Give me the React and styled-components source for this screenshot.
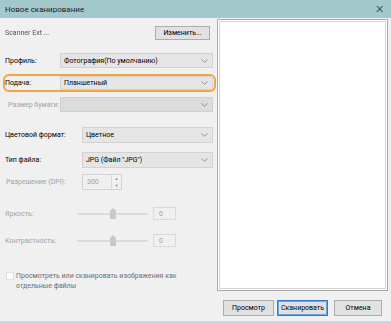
import React from 'react'
import styled, { createGlobalStyle } from 'styled-components'

const Global = createGlobalStyle`
  html, body {
    margin: 0;
    padding: 0;
    background: #f0f0f0;
  }
  * {
    box-sizing: border-box;
  }
`

const Window = styled.div`
  width: 391px;
  height: 323px;
  background: #f0f0f0;
  font-family: Roboto, 'Liberation Sans', Arial, sans-serif;
  font-size: 7px;
  color: #000;
  display: flex;
  flex-direction: column;
  border-bottom: 2px solid #c7d9dc;
  overflow: hidden;
`

const TitleBar = styled.div`
  height: 18px;
  flex: none;
  background: #a3c9cd;
  display: flex;
  align-items: center;
  justify-content: space-between;
  padding: 0 7px 0 5px;
  color: #1a1a1a;
  font-size: 8px;
`

const Close = styled.span`
  font-size: 11px;
  color: #4a5a5e;
  line-height: 1;
`

const Main = styled.div`
  flex: none;
  height: 273px;
  display: flex;
`

const Left = styled.div`
  width: 217px;
  flex: none;
  padding: 8px 4px 0 5px;
  display: flex;
  flex-direction: column;
`

const Preview = styled.div`
  width: 171px;
  margin-top: 1px;
  height: 272px;
  background: #fff;
  border: 1px solid #a9a9a9;
  box-shadow: inset 0 0 0 1px #fff, inset 0 0 0 2px #d6d6d6;
`

const TopRow = styled.div`
  display: flex;
  align-items: center;
  justify-content: space-between;
  height: 14px;
  padding-right: 3px;
`

const Blurred = styled.span`
  color: #555;
  filter: blur(0.7px);
`

const Button = styled.button`
  font: inherit;
  color: #000;
  height: ${p => p.h || 14}px;
  width: ${p => p.w}px;
  padding: 0;
  background: #e1e1e1;
  border: 1px solid ${p => (p.focus ? '#2a7ad6' : '#adadad')};
  box-shadow: ${p => (p.focus ? 'inset 0 0 0 1px #6aa6e6' : 'none')};
  margin-left: ${p => p.ml || 0}px;
  white-space: nowrap;
`

const Underline = styled.div`
  margin-top: 8px;
  height: 2px;
  width: 170px;
  background: #c4c4c4;
`

const Row = styled.div`
  display: flex;
  align-items: center;
  margin-top: ${p => p.mt}px;
  height: ${p => p.h || 15}px;
`

const Highlight = styled.div`
  margin: 6px -3px 0 -2px;
  height: 21px;
  border: 2px solid #f3a43a;
  border-radius: 6px;
  display: flex;
  align-items: center;
  padding-right: 1px;
`

const Label = styled.span`
  width: ${p => p.w}px;
  flex: none;
  white-space: nowrap;
  overflow: hidden;
  color: ${p => (p.disabled ? '#a3a3a3' : '#000')};
  padding-left: ${p => p.pl || 0}px;
`

const Select = styled.div`
  flex: 1;
  height: ${p => p.h || 15}px;
  display: flex;
  align-items: center;
  justify-content: space-between;
  padding: 0 4px 0 3px;
  background: ${p => (p.disabled ? '#dcdcdc' : '#e5e5e5')};
  border: 1px solid ${p => (p.disabled ? '#d0d0d0' : '#d2d2d2')};
  color: #000;
  white-space: nowrap;
`

const Chevron = () => (
  <svg width="7" height="4" viewBox="0 0 7 4">
    <path d="M0.5 0.5 L3.5 3.3 L6.5 0.5" fill="none" stroke="#8a8a8a" strokeWidth="0.9" />
  </svg>
)

const Separator = styled.div`
  margin-top: ${p => p.mt}px;
  height: 1px;
  background: #a7a7a7;
`

const Spin = styled.div`
  width: 40px;
  height: 16px;
  display: flex;
  border: 1px solid #d3d3d3;
  background: #f0f0f0;
  color: #a3a3a3;
`

const SpinValue = styled.span`
  flex: 1;
  padding-left: 4px;
  display: flex;
  align-items: center;
`

const SpinArrows = styled.div`
  width: 10px;
  border-left: 1px solid #d9d9d9;
  display: flex;
  flex-direction: column;
  align-items: center;
  justify-content: space-around;
  font-size: 4px;
  color: #8a8a8a;
`

const Slider = styled.div`
  width: 71px;
  height: 13px;
  display: flex;
  align-items: center;
  justify-content: center;
  background: linear-gradient(#dcdcdc, #dcdcdc) center / 100% 2px no-repeat;
`

const Thumb = styled.div`
  width: 6px;
  height: 11px;
  margin-left: 1px;
  background: #c8c8c8;
  clip-path: polygon(50% 0, 100% 25%, 100% 100%, 0 100%, 0 25%);
`

const ValueBox = styled.div`
  width: 23px;
  height: 13px;
  margin-left: 5px;
  border: 1px solid #d9d9d9;
  color: #a3a3a3;
  padding-left: 5px;
  display: flex;
  align-items: center;
`

const CheckRow = styled.div`
  display: flex;
  margin-top: 24px;
  color: #6e6e6e;
  line-height: 10px;
`

const Box = styled.div`
  width: 8px;
  height: 8px;
  margin: 1px 2px 0 1px;
  background: #fff;
  border: 1px solid #e0e0e0;
  flex: none;
`

const Footer = styled.div`
  flex: 1;
  display: flex;
  align-items: center;
  justify-content: flex-end;
  padding: 3px 9px 0 0;
`

export default function App() {
  return (
    <>
      <Global />
      <Window>
        <TitleBar>
          <span>Новое сканирование</span>
          <Close>✕</Close>
        </TitleBar>
        <Main>
          <Left>
            <TopRow>
              <Blurred>Scanner Ext ...</Blurred>
              <Button w={55}>Изменить...</Button>
            </TopRow>
            <Underline />
            <Row mt={5}>
              <Label w={55}>Профиль:</Label>
              <Select>
                Фотография(По умолчанию)
                <Chevron />
              </Select>
            </Row>
            <Highlight>
              <Label w={55}>Подача:</Label>
              <Select h={14}>
                Планшетный
                <Chevron />
              </Select>
            </Highlight>
            <Row mt={5}>
              <Label w={55} pl={3} disabled>
                Размер бумаги:
              </Label>
              <Select disabled>
                <span />
                <Chevron />
              </Select>
            </Row>
            <Separator mt={10} />
            <Row mt={5} h={16}>
              <Label w={77}>Цветовой формат:</Label>
              <Select h={16}>
                Цветное
                <Chevron />
              </Select>
            </Row>
            <Row mt={9} h={16}>
              <Label w={77}>Тип файла:</Label>
              <Select h={16}>
                JPG (Файл "JPG")
                <Chevron />
              </Select>
            </Row>
            <Row mt={6} h={16}>
              <Label w={77} pl={1} disabled>
                Разрешение (DPI):
              </Label>
              <Spin>
                <SpinValue>300</SpinValue>
                <SpinArrows>
                  <span>▲</span>
                  <span>▼</span>
                </SpinArrows>
              </Spin>
            </Row>
            <Separator mt={8} />
            <Row mt={9} h={13}>
              <Label w={72} disabled>
                Яркость:
              </Label>
              <Slider>
                <Thumb />
              </Slider>
              <ValueBox>0</ValueBox>
            </Row>
            <Row mt={14} h={13}>
              <Label w={72} disabled>
                Контрастность:
              </Label>
              <Slider>
                <Thumb />
              </Slider>
              <ValueBox>0</ValueBox>
            </Row>
            <CheckRow>
              <Box />
              <span>
                Просмотреть или сканировать изображения как
                <br />
                отдельные файлы
              </span>
            </CheckRow>
          </Left>
          <Preview />
        </Main>
        <Footer>
          <Button w={51} h={16}>Просмотр</Button>
          <Button w={51} h={16} ml={3} focus>
            Сканировать
          </Button>
          <Button w={48} h={16} ml={6}>
            Отмена
          </Button>
        </Footer>
      </Window>
    </>
  )
}
